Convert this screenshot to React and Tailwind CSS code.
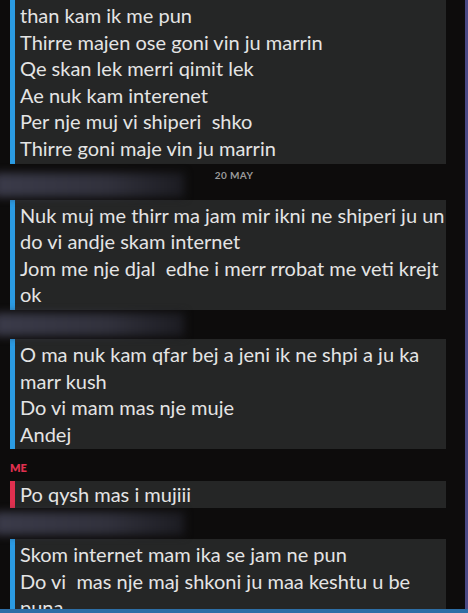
const blue = 'bg-[#2b9be3]'

function Bubble({ lines, bar = 'blue', className = '' }) {
  return (
    <div className={`flex w-[446px] ${className}`}>
      <div className={`w-[5px] shrink-0 ml-[10px] ${bar === 'red' ? 'bg-[#e0304f]' : blue}`} />
      <div className="flex-1 bg-[#252626] pl-[5px] py-[2px] text-[20px] leading-[26.6px] text-[#e4e4e4]">
        {lines.map((l, i) => (
          <div key={i} className="whitespace-pre">{l}</div>
        ))}
      </div>
    </div>
  )
}

// blurred-out sender name
function Smudge({ className = '' }) {
  return (
    <div
      className={`absolute left-[-6px] w-[190px] bg-gradient-to-r from-[#3b3b4a] via-[#31313c] via-60% to-[#1c1c22] blur-[4px] ${className}`}
    />
  )
}

export default function App() {
  return (
    <div
      className="relative h-[613px] w-[468px] overflow-hidden bg-[#0d0c0c]"
      style={{ fontFamily: 'Lato, "Open Sans", sans-serif' }}
    >
      <div className="flex flex-col">
        <Bubble
          lines={[
            'than kam ik me pun',
            'Thirre majen ose goni vin ju marrin',
            'Qe skan lek merri qimit lek',
            'Ae nuk kam interenet',
            'Per nje muj vi shiperi  shko',
            'Thirre goni maje vin ju marrin',
          ]}
        />
        <div className="relative h-[36px]">
          <Smudge className="top-[9px] h-[24px]" />
          <div className="relative pt-[4px] text-center text-[10px] font-bold tracking-[0.4px] text-[#9a9a9a]">
            20 MAY
          </div>
        </div>
        <Bubble
          lines={[
            'Nuk muj me thirr ma jam mir ikni ne shiperi ju un',
            'do vi andje skam internet',
            'Jom me nje djal  edhe i merr rrobat me veti krejt',
            'ok',
          ]}
        />
        <div className="relative h-[29px]">
          <Smudge className="top-[3px] h-[23px]" />
        </div>
        <Bubble
          lines={[
            'O ma nuk kam qfar bej a jeni ik ne shpi a ju ka',
            'marr kush',
            'Do vi mam mas nje muje',
            'Andej',
          ]}
        />
        <div className="h-[32px] pl-[10px] pt-[13px] text-[11px] font-extrabold leading-none text-[#e0304f]">
          ME
        </div>
        <Bubble bar="red" lines={['Po qysh mas i mujiii']} className="[&>div:last-child]:py-0" />
        <div className="relative h-[31px]">
          <Smudge className="top-[4px] h-[23px]" />
        </div>
        <Bubble
          lines={[
            'Skom internet mam ika se jam ne pun',
            'Do vi  mas nje maj shkoni ju maa keshtu u be',
            'puna',
          ]}
        />
      </div>
      <div className="absolute right-0 top-0 h-full w-[3px] bg-[#4b4a86]" />
      <div className="absolute bottom-0 left-0 h-[4px] w-full bg-[#2d6ea6]" />
    </div>
  )
}
